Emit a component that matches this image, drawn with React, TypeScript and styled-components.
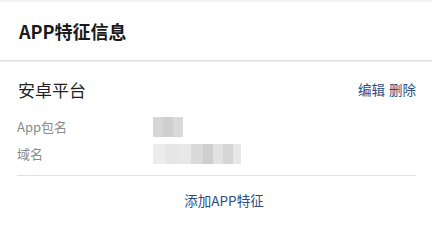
import styled, { createGlobalStyle } from "styled-components";

const GlobalStyle = createGlobalStyle`
  html, body {
    margin: 0;
    padding: 0;
    background: #ffffff;
    font-family: "Noto Sans CJK SC", "Noto Sans", sans-serif;
  }
`;

const Page = styled.div`
  width: 432px;
  height: 226px;
  background: #ffffff;
  border-top: 2px solid #f2f2f2;
  box-sizing: border-box;
  overflow: hidden;
`;

const Header = styled.div`
  height: 58px;
  display: flex;
  align-items: center;
  padding: 0 19px;
  border-bottom: 1px solid #dcdcdc;
  box-shadow: 0 1px 1px rgba(0, 0, 0, 0.06);
  font-size: 18px;
  font-weight: 700;
  color: #1a1a1a;
`;

const Section = styled.div`
  padding: 0 16px 0 17px;
`;

const TitleRow = styled.div`
  display: flex;
  align-items: center;
  justify-content: space-between;
  height: 48px;
  padding-top: 4px;
`;

const Platform = styled.span`
  font-size: 17px;
  color: #1f1f1f;
  padding-left: 1px;
`;

const Actions = styled.div`
  display: flex;
  gap: 4px;
  font-size: 13.5px;
  color: #2b4c7e;
`;

const Row = styled.div`
  display: flex;
  align-items: center;
  height: 27px;
`;

const Label = styled.span`
  width: 136px;
  font-size: 13px;
  color: #8a8a8a;
`;

const Blur = styled.div`
  display: flex;
  height: 20px;
  filter: blur(0.6px);
`;

const Cell = styled.div<{ $w: number; $c: string }>`
  width: ${(p) => p.$w}px;
  height: 100%;
  background: ${(p) => p.$c};
`;

const Rows = styled.div`
  padding-bottom: 8px;
  border-bottom: 1px solid #e0e0e0;
`;

const AddButton = styled.div`
  height: 48px;
  display: flex;
  align-items: center;
  justify-content: center;
  padding-left: 16px;
  font-size: 13.5px;
  color: #2b4c7e;
`;

const pkgCells: [number, string][] = [
  [10, "#d6d6d6"],
  [10, "#cfcfcf"],
  [10, "#d9d9d9"],
];

const domainCells: [number, string][] = [
  [13, "#ececec"],
  [13, "#e6e6e6"],
  [12, "#e8e8e8"],
  [12, "#dadada"],
  [10, "#cfcfcf"],
  [10, "#e2e2e2"],
  [10, "#d6d6d6"],
  [8, "#e7e7e7"],
];

function Blurred({ cells }: { cells: [number, string][] }) {
  return (
    <Blur>
      {cells.map(([w, c], i) => (
        <Cell key={i} $w={w} $c={c} />
      ))}
    </Blur>
  );
}

export default function App() {
  return (
    <>
      <GlobalStyle />
      <Page>
        <Header>APP特征信息</Header>
        <Section>
          <TitleRow>
            <Platform>安卓平台</Platform>
            <Actions>
              <span>编辑</span>
              <span>删除</span>
            </Actions>
          </TitleRow>
          <Rows>
            <Row>
              <Label>App包名</Label>
              <Blurred cells={pkgCells} />
            </Row>
            <Row>
              <Label>域名</Label>
              <Blurred cells={domainCells} />
            </Row>
          </Rows>
        </Section>
        <AddButton>添加APP特征</AddButton>
      </Page>
    </>
  );
}
